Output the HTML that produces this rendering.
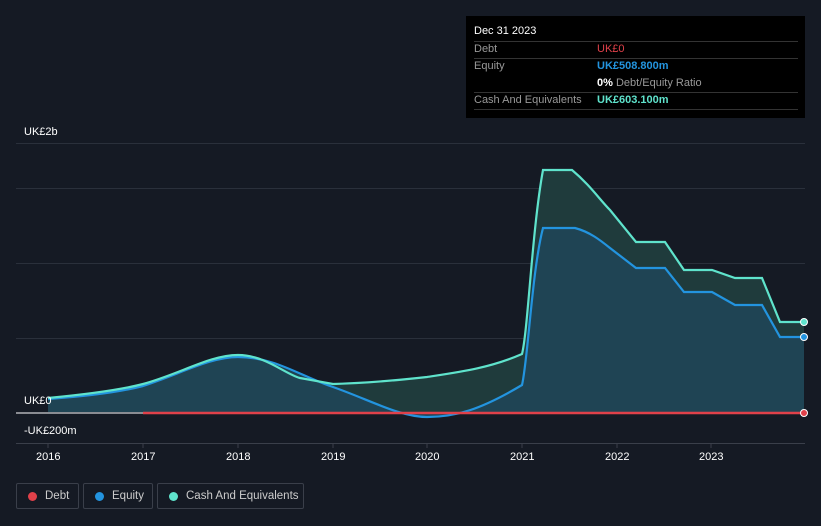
<!DOCTYPE html><html><head><style>
body{margin:0;background:#151a24;width:821px;height:526px;overflow:hidden;font-family:"Liberation Sans",sans-serif;position:relative}
.t{position:absolute;color:#fff;font-size:11px}
.tip{position:absolute;left:466px;top:16px;width:339px;height:102px;background:#000}
.tip div{position:absolute;font-size:11px;white-space:nowrap}
.ln{position:absolute;left:8px;width:324px;height:1px;background:#333}
.lg{position:absolute;top:483px;height:26px;border:1px solid #3a3f4a;border-radius:2px;color:#ccc;font-size:11.5px;line-height:24px;box-sizing:border-box;white-space:nowrap;overflow:hidden}
.lg i{position:absolute;left:11px;top:8px;width:9px;height:9px;border-radius:50%}
</style></head><body>
<svg width="821" height="526" style="position:absolute;left:0;top:0">
<g stroke="#2a303b" stroke-width="1"><line x1="16" y1="143.5" x2="805" y2="143.5"/><line x1="16" y1="188.5" x2="805" y2="188.5"/><line x1="16" y1="263.5" x2="805" y2="263.5"/><line x1="16" y1="338.5" x2="805" y2="338.5"/></g>
<line x1="16" y1="443.5" x2="805" y2="443.5" stroke="#3a3f4a"/>
<g stroke="#3a3f4a"><line x1="48" y1="443" x2="48" y2="448"/><line x1="143" y1="443" x2="143" y2="448"/><line x1="238" y1="443" x2="238" y2="448"/><line x1="333" y1="443" x2="333" y2="448"/><line x1="427" y1="443" x2="427" y2="448"/><line x1="522" y1="443" x2="522" y2="448"/><line x1="617" y1="443" x2="617" y2="448"/><line x1="711" y1="443" x2="711" y2="448"/></g>
<path d="M48,398 C90,394 120,390 143,384 C180,374 210,355 238,355 C265,355 285,374 300,378 L333,384 C370,383 400,380 427,377 C460,372 490,368 522,354 C528,330 532,230 543,170 L572,170 C590,185 600,200 610,210 L636,242 L665,242 L684,270 L712,270 L735,278 L762,278 L780,322 L804,322 L804,412 L48,412Z" fill="#1f3b3c"/>
<path d="M48,399 C90,396 120,392 143,386 C180,374 210,357 238,357 C275,357 300,376 333,387 C370,400 400,417 427,417 C455,417 480,410 522,385 C528,360 532,270 543,228 L575,228 C590,232 600,240 610,248 L636,268 L665,268 L684,292 L712,292 L735,305 L762,305 L780,337 L804,337 L804,412 L48,412Z" fill="#1f4656" opacity="0.9"/>
<path d="M48,399 C90,396 120,392 143,386 C180,374 210,357 238,357 C275,357 300,376 333,387 C370,400 400,417 427,417 C455,417 480,410 522,385 C528,360 532,270 543,228 L575,228 C590,232 600,240 610,248 L636,268 L665,268 L684,292 L712,292 L735,305 L762,305 L780,337 L804,337" fill="none" stroke="#2394df" stroke-width="2.2"/>
<path d="M48,398 C90,394 120,390 143,384 C180,374 210,355 238,355 C265,355 285,374 300,378 L333,384 C370,383 400,380 427,377 C460,372 490,368 522,354 C528,330 532,230 543,170 L572,170 C590,185 600,200 610,210 L636,242 L665,242 L684,270 L712,270 L735,278 L762,278 L780,322 L804,322" fill="none" stroke="#5fe3cc" stroke-width="2.2"/>
<line x1="16" y1="413" x2="143" y2="413" stroke="#fff" stroke-width="1"/>
<line x1="143" y1="413" x2="804" y2="413" stroke="#e0414a" stroke-width="2.5"/>
<circle cx="804" cy="322" r="3.5" fill="#5fe3cc" stroke="#fff"/><circle cx="804" cy="337" r="3.5" fill="#2394df" stroke="#fff"/><circle cx="804" cy="413" r="3.5" fill="#e0414a" stroke="#fff"/>
</svg>
<div class="t" style="left:24px;top:126px">UK£2b</div>
<div class="t" style="left:24px;top:395px">UK£0</div>
<div class="t" style="left:24px;top:425px">-UK£200m</div>
<div class="t" style="left:36px;top:451px">2016</div><div class="t" style="left:131px;top:451px">2017</div><div class="t" style="left:226px;top:451px">2018</div><div class="t" style="left:321px;top:451px">2019</div><div class="t" style="left:415px;top:451px">2020</div><div class="t" style="left:510px;top:451px">2021</div><div class="t" style="left:605px;top:451px">2022</div><div class="t" style="left:699px;top:451px">2023</div>
<div class="tip">
<div style="left:8px;top:9px;color:#fff">Dec 31 2023</div>
<div class="ln" style="top:25px"></div>
<div style="left:8px;top:27px;color:#999">Debt</div><div style="left:131px;top:27px;color:#e0414a">UK£0</div>
<div class="ln" style="top:42px"></div>
<div style="left:8px;top:44px;color:#999">Equity</div><div style="left:131px;top:44px;color:#2394df;font-weight:bold">UK£508.800m</div>
<div style="left:131px;top:61px;color:#999"><b style="color:#fff">0%</b> Debt/Equity Ratio</div>
<div class="ln" style="top:76px"></div>
<div style="left:8px;top:78px;color:#999">Cash And Equivalents</div><div style="left:131px;top:78px;color:#5fe3cc;font-weight:bold">UK£603.100m</div>
<div class="ln" style="top:93px"></div>
</div>
<div class="lg" style="left:16px;width:63px"><i style="background:#e0414a"></i><span style="margin-left:28px">Debt</span></div>
<div class="lg" style="left:83px;width:70px"><i style="background:#2394df"></i><span style="margin-left:28px">Equity</span></div>
<div class="lg" style="left:157px;width:147px"><i style="background:#5fe3cc"></i><span style="margin-left:28px">Cash And Equivalents</span></div>
</body></html>
